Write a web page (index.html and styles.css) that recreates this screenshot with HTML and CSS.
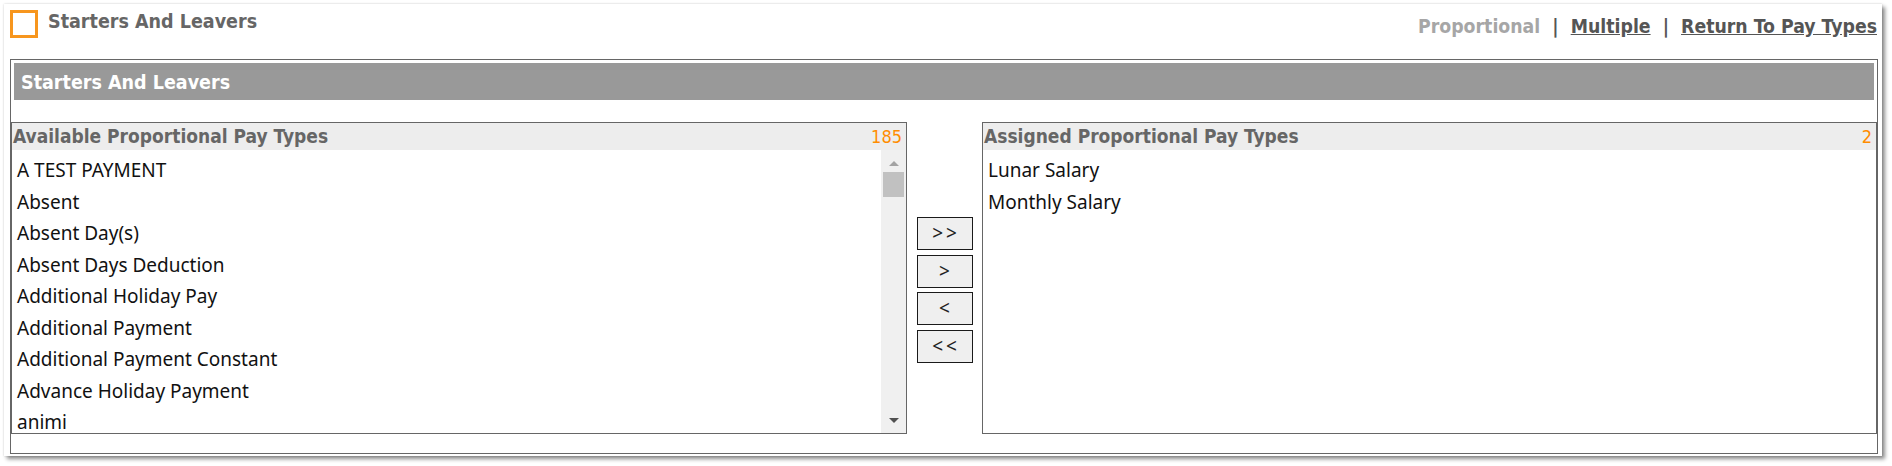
FILE: index.html
```html
<!DOCTYPE html>
<html>
<head>
<meta charset="utf-8">
<title>Starters And Leavers</title>
<link rel="stylesheet" href="styles.css">
</head>
<body>
<div class="card">
  <div class="topbar">
    <div class="title">
      <span class="square"></span>
      <span class="title-text">Starters And Leavers</span>
    </div>
    <div class="links">
      <span class="link-off">Proportional</span>
      <span class="sep">|</span>
      <a class="link" href="#">Multiple</a>
      <span class="sep">|</span>
      <a class="link" href="#">Return To Pay Types</a>
    </div>
  </div>
  <div class="box">
    <div class="bar">Starters And Leavers</div>
    <div class="cols">
      <div class="list list-left">
        <div class="lhead"><span class="lhead-title">Available Proportional Pay Types</span><span class="count">185</span></div>
        <div class="lbody">
          <div class="items">
            <div class="item">A TEST PAYMENT</div>
            <div class="item">Absent</div>
            <div class="item">Absent Day(s)</div>
            <div class="item">Absent Days Deduction</div>
            <div class="item">Additional Holiday Pay</div>
            <div class="item">Additional Payment</div>
            <div class="item">Additional Payment Constant</div>
            <div class="item">Advance Holiday Payment</div>
            <div class="item">animi</div>
          </div>
          <div class="sbar">
            <span class="arrow-up"></span>
            <span class="thumb"></span>
            <span class="sbar-fill"></span>
            <span class="arrow-down"></span>
          </div>
        </div>
      </div>
      <div class="mid">
        <button class="btn">&gt;&gt;</button>
        <button class="btn">&gt;</button>
        <button class="btn">&lt;</button>
        <button class="btn">&lt;&lt;</button>
      </div>
      <div class="list list-right">
        <div class="lhead"><span class="lhead-title">Assigned Proportional Pay Types</span><span class="count">2</span></div>
        <div class="lbody">
          <div class="items">
            <div class="item">Lunar Salary</div>
            <div class="item">Monthly Salary</div>
          </div>
        </div>
      </div>
    </div>
  </div>
</div>
</body>
</html>
```

FILE: styles.css
```css
* { box-sizing: border-box; }
html, body { margin: 0; padding: 0; background: #fff; }
body { width: 1892px; height: 466px; overflow: hidden; }

.card {
  margin: 4px 0 0 4px;
  width: 1878px;
  height: 452px;
  padding: 6px 4px 0 6px;
  background: #fff;
  box-shadow: 0 0 2px rgba(0,0,0,0.18), 3px 3px 4px rgba(0,0,0,0.45);
}

.topbar {
  height: 49px;
  display: flex;
  justify-content: space-between;
  align-items: flex-start;
}

.title { display: flex; align-items: flex-start; }
.square {
  width: 28px;
  height: 28px;
  border: 3px solid #f7961e;
  margin-right: 10px;
}
.title-text,
.bar,
.lhead-title,
.links {
  font-family: "DejaVu Sans Condensed", "DejaVu Sans", sans-serif;
  font-stretch: condensed;
  font-weight: bold;
  font-size: 19px;
}
.title-text {
  color: #666;
  font-size: 19.5px;
  line-height: 22px;
  padding-top: 1px;
}

.links {
  color: #555;
  font-size: 19.3px;
  line-height: 22px;
  padding-top: 6px;
  padding-right: 1px;
}
.link-off { color: #a6a6a6; }
.sep { margin: 0 6px; color: #555; }
.link { color: #555; text-decoration: underline; }

.box {
  border: 1px solid #666;
  height: 395px;
}
.bar {
  margin: 3px;
  height: 37px;
  background: #999;
  color: #fff;
  font-size: 19.5px;
  line-height: 22px;
  padding: 9px 0 0 7px;
}

.cols {
  display: flex;
  padding-top: 19px;
}

.list {
  border: 1px solid #666;
  height: 312px;
  display: flex;
  flex-direction: column;
}
.list-left { width: 896px; }
.list-right { width: 895px; }

.lhead {
  height: 27px;
  background: #ededed;
  display: flex;
  justify-content: space-between;
  padding: 0 4px 0 1px;
  line-height: 27px;
}
.lhead-title { color: #666; }
.count {
  color: #ff8c00;
  font-family: "DejaVu Sans Condensed", "DejaVu Sans", sans-serif;
  font-stretch: condensed;
  font-size: 18px;
}

.lbody {
  flex: 1;
  display: flex;
  overflow: hidden;
}
.items {
  flex: 1;
  padding: 5px 0 0 5px;
  font-family: "Noto Sans", sans-serif;
  font-size: 19px;
  line-height: 31.5px;
  color: #111;
  overflow: hidden;
}
.item { white-space: nowrap; }

.sbar {
  width: 25px;
  background: #f0f0f0;
  display: flex;
  flex-direction: column;
  align-items: center;
  padding: 11px 0 10px;
}
.arrow-up {
  width: 0; height: 0;
  border-left: 5px solid transparent;
  border-right: 5px solid transparent;
  border-bottom: 5px solid #a3a3a3;
}
.thumb {
  margin-top: 6px;
  width: 21px;
  height: 25px;
  background: #c1c1c1;
}
.sbar-fill { flex: 1; }
.arrow-down {
  width: 0; height: 0;
  border-left: 5px solid transparent;
  border-right: 5px solid transparent;
  border-top: 5px solid #505050;
}

.mid {
  width: 75px;
  display: flex;
  flex-direction: column;
  align-items: center;
  gap: 4.5px;
  padding-top: 95px;
}
.btn {
  width: 56px;
  height: 33px;
  border: 1px solid #1a1a1a;
  background: #efefef;
  border-radius: 0;
  padding: 0;
  margin: 0;
  font-family: "Noto Sans", sans-serif;
  font-size: 19px;
  letter-spacing: 3px;
  text-indent: 3px;
  color: #222;
  line-height: 1;
}
```
